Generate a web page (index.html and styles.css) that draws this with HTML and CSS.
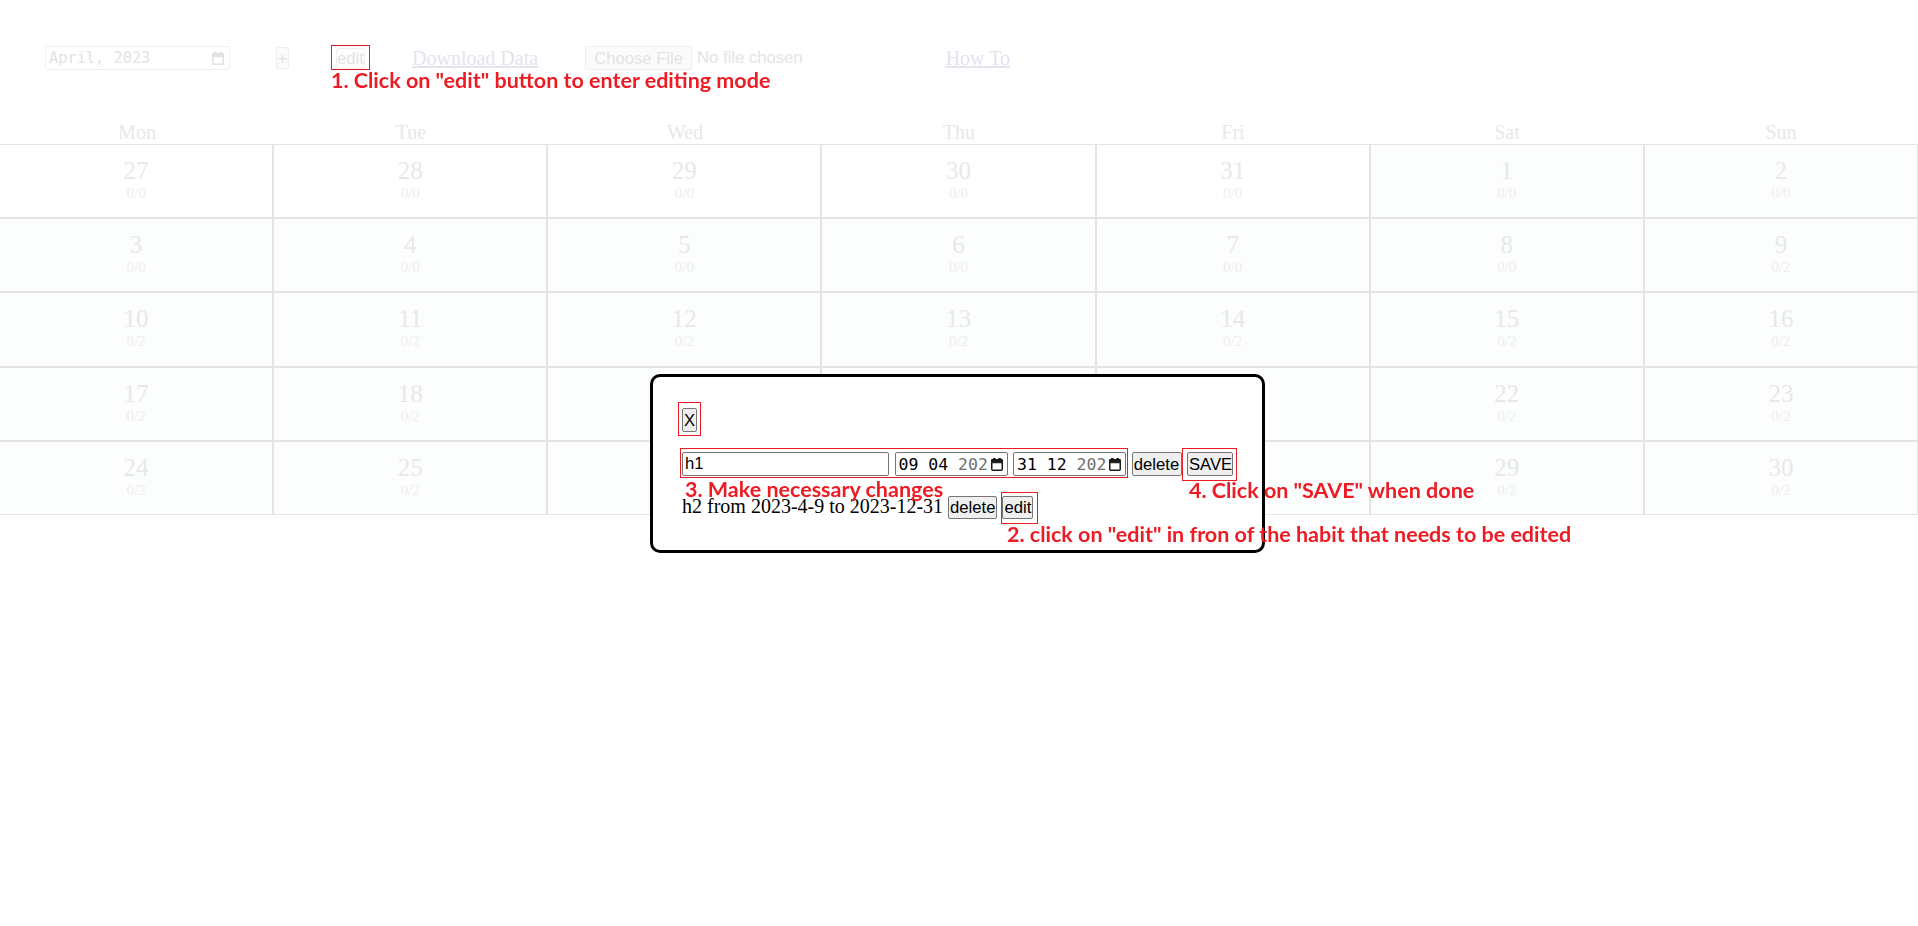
FILE: index.html
```html
<!DOCTYPE html>
<html lang="en">
<head>
<meta charset="utf-8">
<title>Habit calendar</title>
<link rel="stylesheet" href="styles.css">
</head>
<body>
<div class="page">
  <header class="toolbar">
    <div class="month-input">
      <span class="mi-text">April, 2023</span>
      <svg class="cal-icon faded-icon" viewBox="0 0 12 13" width="12" height="13"><rect x="2.5" y="0" width="1.6" height="2.4"/><rect x="7.9" y="0" width="1.6" height="2.4"/><rect x="0.75" y="1.75" width="10.5" height="10.5" rx="1" fill="none" stroke-width="1.5"/><rect x="0.75" y="1.75" width="10.5" height="3"/></svg>
    </div>
    <button class="bg-btn plus-btn">+</button>
    <button class="bg-btn edit-btn">edit</button>
    <a class="bg-link download-link" href="#">Download Data</a>
    <div class="file-input">
      <button class="bg-btn file-btn">Choose File</button>
      <span class="file-text">No file chosen</span>
    </div>
    <a class="bg-link howto-link" href="#">How To</a>
  </header>

  <section class="calendar">
    <div class="weekdays">
      <div>Mon</div><div>Tue</div><div>Wed</div><div>Thu</div><div>Fri</div><div>Sat</div><div>Sun</div>
    </div>
    <div class="days">
      <div class="day other"><div class="num">27</div><div class="count">0/0</div></div>
      <div class="day other"><div class="num">28</div><div class="count">0/0</div></div>
      <div class="day other"><div class="num">29</div><div class="count">0/0</div></div>
      <div class="day other"><div class="num">30</div><div class="count">0/0</div></div>
      <div class="day other"><div class="num">31</div><div class="count">0/0</div></div>
      <div class="day"><div class="num">1</div><div class="count">0/0</div></div>
      <div class="day"><div class="num">2</div><div class="count">0/0</div></div>

      <div class="day"><div class="num">3</div><div class="count">0/0</div></div>
      <div class="day"><div class="num">4</div><div class="count">0/0</div></div>
      <div class="day"><div class="num">5</div><div class="count">0/0</div></div>
      <div class="day"><div class="num">6</div><div class="count">0/0</div></div>
      <div class="day"><div class="num">7</div><div class="count">0/0</div></div>
      <div class="day"><div class="num">8</div><div class="count">0/0</div></div>
      <div class="day"><div class="num">9</div><div class="count">0/2</div></div>

      <div class="day"><div class="num">10</div><div class="count">0/2</div></div>
      <div class="day"><div class="num">11</div><div class="count">0/2</div></div>
      <div class="day"><div class="num">12</div><div class="count">0/2</div></div>
      <div class="day"><div class="num">13</div><div class="count">0/2</div></div>
      <div class="day"><div class="num">14</div><div class="count">0/2</div></div>
      <div class="day"><div class="num">15</div><div class="count">0/2</div></div>
      <div class="day"><div class="num">16</div><div class="count">0/2</div></div>

      <div class="day"><div class="num">17</div><div class="count">0/2</div></div>
      <div class="day"><div class="num">18</div><div class="count">0/2</div></div>
      <div class="day"><div class="num">19</div><div class="count">0/2</div></div>
      <div class="day"><div class="num">20</div><div class="count">0/2</div></div>
      <div class="day"><div class="num">21</div><div class="count">0/2</div></div>
      <div class="day"><div class="num">22</div><div class="count">0/2</div></div>
      <div class="day"><div class="num">23</div><div class="count">0/2</div></div>

      <div class="day"><div class="num">24</div><div class="count">0/2</div></div>
      <div class="day"><div class="num">25</div><div class="count">0/2</div></div>
      <div class="day"><div class="num">26</div><div class="count">0/2</div></div>
      <div class="day"><div class="num">27</div><div class="count">0/2</div></div>
      <div class="day"><div class="num">28</div><div class="count">0/2</div></div>
      <div class="day"><div class="num">29</div><div class="count">0/2</div></div>
      <div class="day"><div class="num">30</div><div class="count">0/2</div></div>
    </div>
  </section>
</div>

<div class="modal">
  <div class="close-row"><button class="btn close-btn">X</button></div>
  <div class="edit-row">
    <input class="text-input" type="text" value="h1">
    <div class="date-field d1"><span class="dv">09 04 <span class="yr">202</span></span><svg class="cal-icon" viewBox="0 0 12 13" width="12" height="13"><rect x="2.5" y="0" width="1.6" height="2.4"/><rect x="7.9" y="0" width="1.6" height="2.4"/><rect x="0.75" y="1.75" width="10.5" height="10.5" rx="1" fill="none" stroke-width="1.5"/><rect x="0.75" y="1.75" width="10.5" height="3"/></svg></div>
    <div class="date-field d2"><span class="dv">31 12 <span class="yr">202</span></span><svg class="cal-icon" viewBox="0 0 12 13" width="12" height="13"><rect x="2.5" y="0" width="1.6" height="2.4"/><rect x="7.9" y="0" width="1.6" height="2.4"/><rect x="0.75" y="1.75" width="10.5" height="10.5" rx="1" fill="none" stroke-width="1.5"/><rect x="0.75" y="1.75" width="10.5" height="3"/></svg></div>
    <button class="btn row-btn del-btn">delete</button>
    <button class="btn row-btn save-btn">SAVE</button>
  </div>
  <div class="habit-line">h2 from 2023-4-9 to 2023-12-31 <button class="btn line-btn">delete</button> <button class="btn line-btn">edit</button></div>
</div>

<div class="annotations">
  <div class="box box-edit-top"></div>
  <div class="box box-x"></div>
  <div class="box box-row"></div>
  <div class="box box-save"></div>
  <div class="box box-edit-habit"></div>
  <div class="note note1">1. Click on "edit" button to enter editing mode</div>
  <div class="note note2">2. click on "edit" in fron of the habit that needs to be edited</div>
  <div class="note note3">3. Make necessary changes</div>
  <div class="note note4">4. Click on "SAVE" when done</div>
</div>
</body>
</html>
```

FILE: styles.css
```css
html, body {
  margin: 0;
  padding: 0;
  background: #ffffff;
}

body {
  font-family: "Liberation Serif", "Times New Roman", serif;
  font-size: 20px;
  overflow: hidden;
  position: relative;
  min-height: 926px;
}

/* ---------- faded background page ---------- */
.toolbar {
  display: flex;
  align-items: center;
  height: 24px;
  padding: 46px 0 0 45px;
}

.month-input {
  box-sizing: border-box;
  width: 185px;
  height: 24px;
  border: 1px solid #efefef;
  border-radius: 2px;
  display: flex;
  align-items: center;
  justify-content: space-between;
  padding: 0 5px 0 3px;
  font-family: "DejaVu Sans Mono", monospace;
  font-size: 15.3px;
  color: #e3e3e3;
}

.cal-icon {
  display: block;
  fill: #1a1a1a;
  stroke: #1a1a1a;
  flex: none;
}

.faded-icon {
  fill: #e2e2e2;
  stroke: #e2e2e2;
}

.bg-btn {
  box-sizing: border-box;
  font-family: "Liberation Sans", Arial, sans-serif;
  font-size: 16.67px;
  color: #e3e3e3;
  background: #fbfbfb;
  border: 1px solid #efefef;
  border-radius: 2px;
  padding: 0;
  line-height: 19px;
}

.plus-btn {
  margin-left: 46px;
  width: 13px;
  height: 22px;
}

.edit-btn {
  margin-left: 47px;
  width: 29px;
  height: 21px;
  background: #fdfdfd;
}

.bg-link {
  color: #e4e3ee;
  text-decoration: underline;
  font-size: 20px;
}

.download-link {
  margin-left: 47px;
}

.file-input {
  margin-left: 47px;
  display: flex;
  align-items: center;
}

.file-btn {
  width: 107px;
  height: 24px;
}

.file-text {
  margin-left: 5px;
  font-family: "Liberation Sans", Arial, sans-serif;
  font-size: 16.67px;
  color: #e4e4e4;
}

.howto-link {
  margin-left: 143px;
}

.calendar {
  margin-top: 50.7px;
}

.weekdays {
  display: grid;
  grid-template-columns: repeat(7, 1fr);
  height: 23.3px;
  line-height: 23px;
  text-align: center;
  color: #e8e8e8;
}

.days {
  display: grid;
  grid-template-columns: repeat(7, 1fr);
  grid-auto-rows: 74.2px;
  margin-left: -1px;
  width: calc(100% + 1px);
}

.day {
  border: 1px solid #e4e4e4;
  background: #fcfefe;
  text-align: center;
  padding-top: 12px;
}

.day.other {
  background: #ffffff;
}

.num {
  font-size: 25px;
  line-height: 28px;
  color: #e8e8e8;
}

.count {
  font-size: 15px;
  line-height: 17px;
  color: #ededed;
}

/* ---------- modal ---------- */
.modal {
  position: fixed;
  left: 650px;
  top: 374px;
  width: 615px;
  height: 179px;
  box-sizing: border-box;
  border: 3px solid #000000;
  border-radius: 10px;
  background: #ffffff;
  padding: 31px 28px 0 29px;
  z-index: 5;
}

.btn {
  box-sizing: border-box;
  font-family: "Liberation Sans", Arial, sans-serif;
  font-size: 16.67px;
  color: #000000;
  background: #efefef;
  border: 1px solid #767676;
  border-radius: 2px;
  padding: 0 1px;
  line-height: 19px;
}

.close-row {
  height: 24px;
  margin-bottom: 20px;
}

.close-btn {
  height: 24px;
  width: 15px;
  display: block;
}

.edit-row {
  display: flex;
  gap: 5.5px;
  height: 24px;
  align-items: stretch;
}

.text-input {
  box-sizing: border-box;
  width: 207px;
  height: 24px;
  margin: 0;
  border: 1px solid #767676;
  border-radius: 2px;
  padding: 0 2px;
  font-family: "Liberation Sans", Arial, sans-serif;
  font-size: 16.67px;
  color: #000;
  outline: none;
}

.date-field {
  box-sizing: border-box;
  width: 113px;
  height: 24px;
  border: 1px solid #767676;
  border-radius: 2px;
  display: flex;
  align-items: center;
  justify-content: space-between;
  padding: 0 4px 0 3px;
  overflow: hidden;
  font-family: "DejaVu Sans Mono", monospace;
  font-size: 16.5px;
  color: #000;
  white-space: pre;
}

.yr {
  color: #707070;
}

.row-btn {
  height: 24px;
}

.del-btn {
  width: 50px;
}

.save-btn {
  width: 46px;
}

.habit-line {
  margin-top: 18.76px;
  font-size: 20px;
  color: #000;
  white-space: nowrap;
}

.line-btn {
  height: 23px;
  vertical-align: baseline;
}

/* ---------- tutorial annotations ---------- */
.annotations {
  position: absolute;
  left: 0;
  top: 0;
  width: 100%;
  height: 926px;
  pointer-events: none;
  z-index: 10;
}

.box {
  position: absolute;
  box-sizing: border-box;
  border: 1px solid #ed1c24;
}

.box-edit-top { left: 331px; top: 45px; width: 39px; height: 25px; }
.box-x { left: 678px; top: 402px; width: 23px; height: 34px; }
.box-row { left: 680px; top: 448px; width: 448px; height: 30px; }
.box-save { left: 1182px; top: 448px; width: 55px; height: 33px; }
.box-edit-habit { left: 1001px; top: 492px; width: 37px; height: 32px; }

.note {
  position: absolute;
  font-family: "Lato", "Liberation Sans", sans-serif;
  font-weight: 700;
  font-size: 21.5px;
  line-height: 21.5px;
  color: #ed1c24;
  white-space: nowrap;
}

.note1 { left: 331px; top: 70px; }
.note2 { left: 1007px; top: 524px; }
.note3 { left: 685px; top: 479px; }
.note4 { left: 1189px; top: 480px; }
```
